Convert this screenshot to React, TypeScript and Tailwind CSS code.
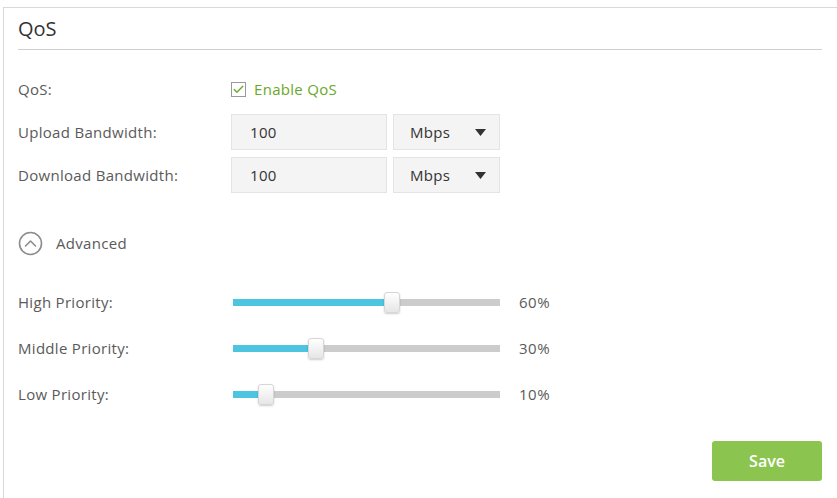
import { Check } from "lucide-react";

const font = { fontFamily: '"Open Sans", "Liberation Sans", sans-serif' };

export default function App() {
  return (
    <div className="w-[837px] h-[498px] bg-white overflow-hidden pt-[7px] pl-[3px]" style={font}>
      <div className="h-[520px] border-l border-t border-[#d9d9d9] pl-[14px] pr-[15px]">
        <div className="border-b border-[#cfcfcf] h-[42px] pt-[8px]">
          <h2 className="text-[20px] leading-[25px] text-[#333]">QoS</h2>
        </div>

        <div className="mt-[27px] flex items-center h-[24px]">
          <div className="w-[213px] text-[15px] tracking-[0.3px] text-[#5a5a5a]">QoS:</div>
          <label className="flex items-center gap-[8px] text-[15px] tracking-[0.3px] text-[#6aa829]">
            <span className="w-[15px] h-[15px] border border-[#999] flex items-center justify-center bg-white">
              <Check className="w-[13px] h-[13px] text-[#6aa829]" strokeWidth={2.5} />
            </span>
            Enable QoS
          </label>
        </div>

        <div className="mt-[13px] flex flex-col gap-[7px]">
          <BandwidthRow label="Upload Bandwidth:" />
          <BandwidthRow label="Download Bandwidth:" />
        </div>

        <div className="mt-[37px] flex items-center gap-[13px] h-[26px]">
          <svg width="25" height="25" viewBox="0 0 25 25" className="shrink-0">
            <circle cx="12.5" cy="12.5" r="11" fill="none" stroke="#8c8c8c" strokeWidth="1.6" />
            <path d="M7.5 15 L12.5 10 L17.5 15" fill="none" stroke="#8c8c8c" strokeWidth="1.6" strokeLinecap="round" strokeLinejoin="round" />
          </svg>
          <span className="text-[15px] tracking-[0.3px] text-[#5a5a5a]">Advanced</span>
        </div>

        <div className="mt-[36px] flex flex-col gap-[26px]">
          <SliderRow label="High Priority:" pct={60} />
          <SliderRow label="Middle Priority:" pct={30} />
          <SliderRow label="Low Priority:" pct={10} />
        </div>

        <div className="mt-[37px] flex justify-end w-[804px]">
          <button className="w-[110px] h-[40px] rounded-[3px] bg-[#8cc450] text-white text-[16px] font-semibold">Save</button>
        </div>
      </div>
    </div>
  );
}

function BandwidthRow({ label }: { label: string }) {
  return (
    <div className="flex items-center">
      <div className="w-[213px] text-[15px] tracking-[0.3px] text-[#5a5a5a]">{label}</div>
      <div className="w-[156px] h-[36px] bg-[#f4f4f4] border border-[#e4e4e4] flex items-center pl-[18px] text-[15px] tracking-[0.3px] text-[#333]">
        100
      </div>
      <div className="ml-[6px] w-[107px] h-[36px] bg-[#f4f4f4] border border-[#e4e4e4] flex items-center justify-between pl-[16px] pr-[13px] text-[15px] tracking-[0.3px] text-[#333]">
        <span>Mbps</span>
        <svg width="11" height="7" viewBox="0 0 11 7">
          <path d="M0 0 H11 L5.5 7 Z" fill="#333" />
        </svg>
      </div>
    </div>
  );
}

function SliderRow({ label, pct }: { label: string; pct: number }) {
  const trackW = 267;
  const handleW = 16;
  const left = (pct / 100) * (trackW - handleW);
  return (
    <div className="flex items-center h-[20px]">
      <div className="w-[215px] text-[15px] tracking-[0.3px] text-[#5a5a5a]">{label}</div>
      <div className="relative w-[267px] h-[7px] bg-[#cccccc]">
        <div className="absolute left-0 top-0 h-full bg-[#4dc5e0]" style={{ width: left + handleW / 2 }} />
        <div
          className="absolute top-[-7px] w-[16px] h-[21px] rounded-[3px] border border-[#d6d6d6] bg-gradient-to-b from-white to-[#e6e6e6] shadow-[0_1px_2px_rgba(0,0,0,0.2)]"
          style={{ left }}
        />
      </div>
      <div className="ml-[19px] text-[15px] tracking-[0.5px] text-[#5a5a5a]">{pct}%</div>
    </div>
  );
}
